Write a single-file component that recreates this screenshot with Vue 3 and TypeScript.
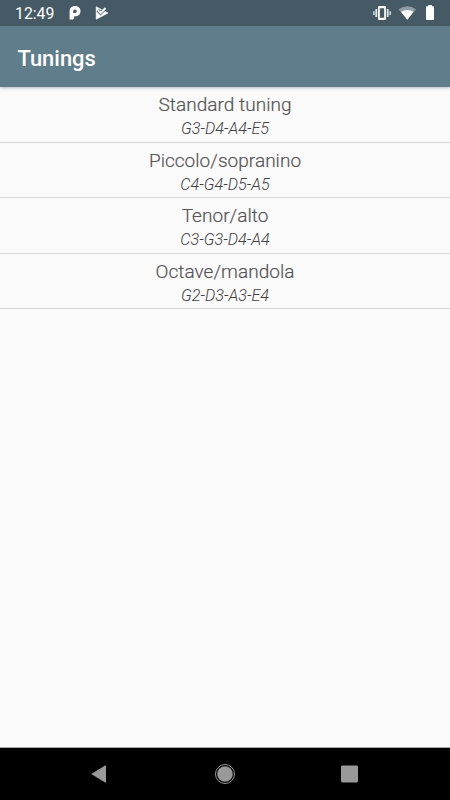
<script setup lang="ts">
interface Tuning {
  name: string
  notes: string
}

const tunings: Tuning[] = [
  { name: 'Standard tuning', notes: 'G3-D4-A4-E5' },
  { name: 'Piccolo/sopranino', notes: 'C4-G4-D5-A5' },
  { name: 'Tenor/alto', notes: 'C3-G3-D4-A4' },
  { name: 'Octave/mandola', notes: 'G2-D3-A3-E4' },
]
</script>

<template>
  <div class="screen">
    <header class="status">
      <span class="clock">12:49</span>
      <svg class="notif" width="12" height="14" viewBox="0 0 12 14">
        <path fill="#fff" fill-rule="evenodd" d="M6 0.1C9.4 0.1 11.5 2.2 11.5 5.2C11.5 8.3 9.3 10.3 6.2 10.3H5.2V11.2C5.2 12.8 4.4 13.6 2.9 13.6H0.6V5.4C0.6 2.2 2.7 0.1 6 0.1ZM6 3.4C4.8 3.4 4.2 4.2 4.2 5.2V7H6C7 7 7.8 6.3 7.8 5.2C7.8 4.1 7 3.4 6 3.4Z" />
      </svg>
      <svg class="play" width="14" height="14" viewBox="0 0 14 14">
        <path fill="#fff" stroke="#fff" stroke-width=".6" stroke-linejoin="round" d="M1.2 0.7L13 7L1.2 13.3Z" />
        <path fill="none" stroke="#455a64" stroke-width="3.4" d="M2.8 4.2L5.6 7L11.3 1.3" />
        <path fill="none" stroke="#fff" stroke-width="2" d="M3 4.4L5.6 7L10.6 2" />
      </svg>
      <span class="spacer"></span>
      <svg class="system" width="64" height="18" viewBox="0 0 64 18">
        <g fill="#fff">
          <path fill-rule="evenodd" d="M6 2H12Q13 2 13 3V15Q13 16 12 16H6Q5 16 5 15V3Q5 2 6 2ZM6.8 4.2V13.8H11.2V4.2Z" />
          <path fill-opacity=".85" d="M2.4 5H4.2V13H2.4ZM0.2 7.2H1.6V11H0.2ZM13.8 5H15.6V13H13.8ZM16.5 7.2H17.9V11H16.5Z" />
          <path fill-opacity=".4" d="M25.6 5.3Q34.3 -1 43 5.3L34.3 15.8Z" />
          <path d="M28 7.8Q34.3 4.3 40.6 7.8L34.3 15.8Z" />
          <path d="M55.2 2.2V1H58.8V2.2H60.2Q61 2.2 61 3V15.2Q61 16 60.2 16H53.8Q53 16 53 15.2V3Q53 2.2 53.8 2.2Z" />
        </g>
      </svg>
    </header>
    <div class="appbar"><h1>Tunings</h1></div>
    <main>
      <ul class="list">
        <li v-for="tuning in tunings" :key="tuning.name">
          <span class="name">{{ tuning.name }}</span>
          <em class="notes">{{ tuning.notes }}</em>
        </li>
      </ul>
    </main>
    <nav class="navbar">
      <svg width="24" height="24" viewBox="0 0 24 24"><path fill="#999" d="M4.2 12L18.6 3.2Q19 3 19 3.5V20.5Q19 21 18.6 20.8Z" /></svg>
      <svg width="24" height="24" viewBox="0 0 24 24"><circle cx="13" cy="12" r="9.5" fill="none" stroke="#999" /><circle cx="13" cy="12" r="7.8" fill="#999" /></svg>
      <svg width="24" height="24" viewBox="0 0 24 24"><rect x="4" y="3.5" width="17" height="17" rx="1.4" fill="#999" /></svg>
    </nav>
  </div>
</template>

<style>
body {
  margin: 0;
}
</style>

<style scoped>
.screen {
  display: flex;
  flex-direction: column;
  width: 450px;
  height: 800px;
  overflow: hidden;
  background: #fafafa;
  font-family: Roboto, sans-serif;
}
.status {
  display: flex;
  align-items: center;
  flex: none;
  box-sizing: border-box;
  height: 26px;
  padding: 0 14px 0 15px;
  background: #455a64;
}
.clock {
  width: 54px;
  padding-top: 2px;
  color: #fff;
  font-size: 15.8px;
  line-height: 24px;
}
.play {
  margin-left: 14px;
}
.spacer {
  flex: 1;
}
.system {
  margin-right: -1px;
}
.appbar {
  display: flex;
  align-items: center;
  flex: none;
  box-sizing: border-box;
  height: 61px;
  padding: 4px 17.5px 0;
  background: #607d8b;
  box-shadow: 0 1px 3px rgba(0, 0, 0, 0.25);
}
h1 {
  margin: 0;
  color: #fff;
  font-size: 21.9px;
  font-weight: 500;
  line-height: 28px;
}
main {
  flex: 1;
}
.list {
  margin: 0;
  padding: 0;
  list-style: none;
}
.list li {
  display: flex;
  flex-direction: column;
  align-items: center;
  box-sizing: border-box;
  height: 55.5px;
  padding-top: 6px;
  border-bottom: 1px solid #d6d6d6;
  color: #555;
}
.name {
  font-size: 19px;
  font-weight: 300;
  letter-spacing: 0.04px;
  line-height: 24px;
  -webkit-text-stroke: 0.2px #555;
}
.notes {
  font-size: 16.2px;
  font-weight: 300;
  line-height: 24px;
  color: #404040;
}
.navbar {
  display: flex;
  align-items: center;
  justify-content: space-between;
  flex: none;
  box-sizing: border-box;
  height: 53px;
  padding: 0 89px 0 87px;
  border-top: 1px solid #a9a9a9;
  background: #000;
}
</style>
